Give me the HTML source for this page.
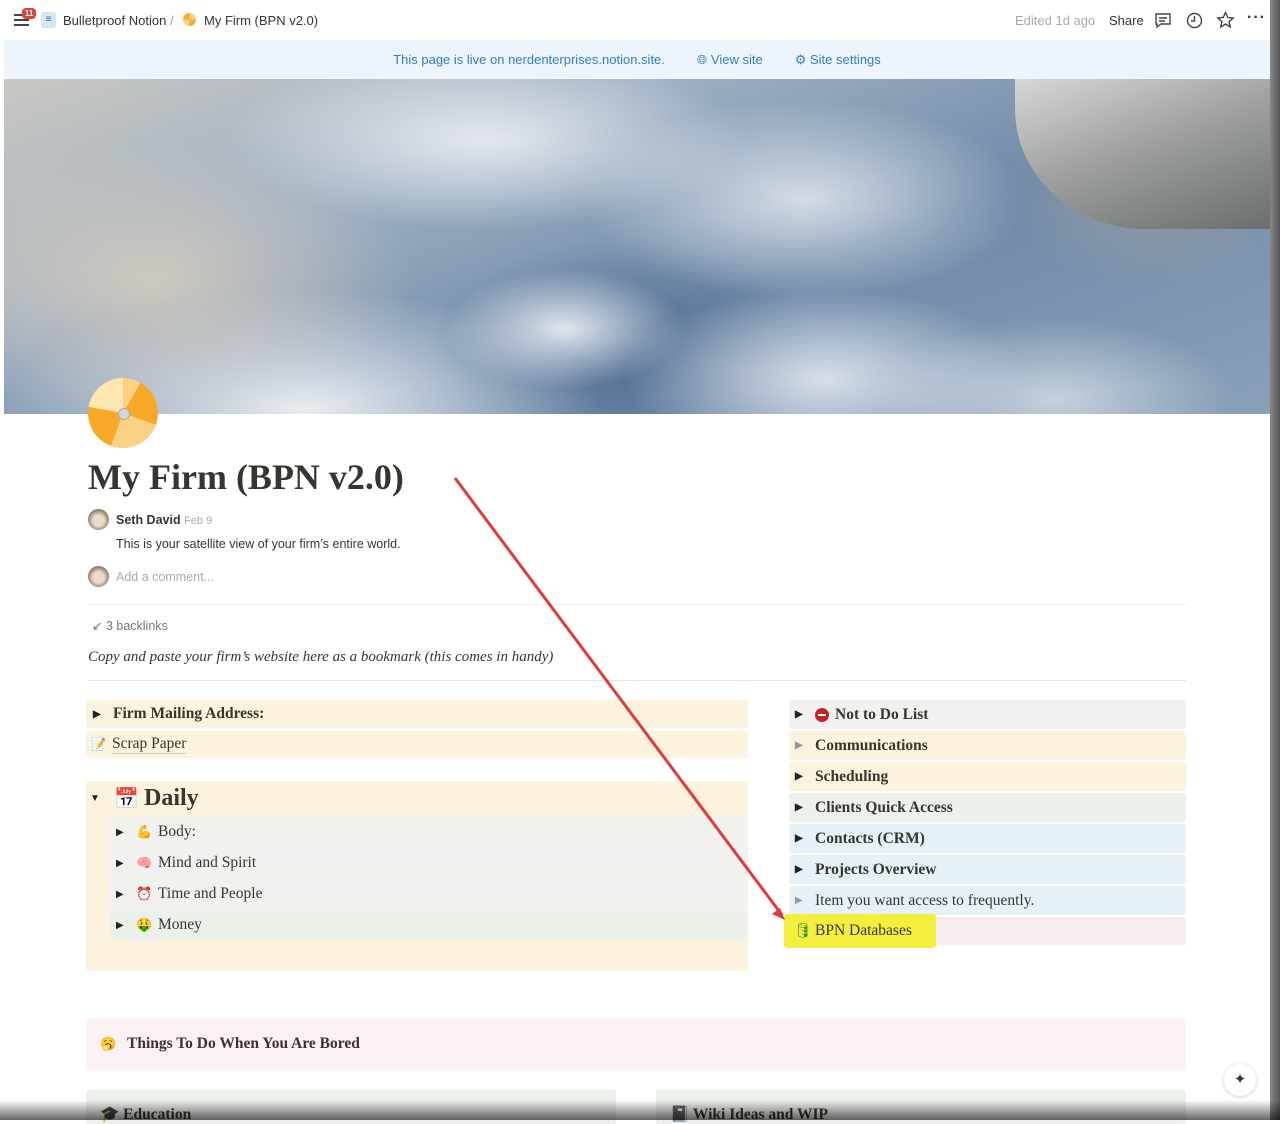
<!DOCTYPE html>
<html><head><meta charset="utf-8"><style>
*{box-sizing:border-box;margin:0;padding:0}
body{width:1280px;height:1120px;overflow:hidden;background:#fff;font-family:"Liberation Sans",sans-serif;color:#37352f;position:relative}
.serif{font-family:"Liberation Serif",serif}
.top{position:absolute;left:0;top:0;width:1270px;height:40px;display:flex;align-items:center;font-size:13px}
.banner{position:absolute;left:4px;top:40px;width:1266px;height:39px;background:#eef4fb;color:#2f7fc4;font-size:13px;display:flex;align-items:center;justify-content:center;gap:32px}
.cover{position:absolute;left:4px;top:79px;width:1266px;height:335px;
background:
radial-gradient(ellipse 260px 140px at 150px 200px,rgba(215,205,190,.85),transparent),
radial-gradient(ellipse 300px 120px at 300px 330px,rgba(240,242,246,.95),transparent),
radial-gradient(ellipse 260px 90px at 480px 60px,rgba(235,238,242,.9),transparent),
radial-gradient(ellipse 120px 60px at 560px 250px,rgba(240,242,246,.9),transparent),
radial-gradient(ellipse 220px 100px at 800px 120px,rgba(228,232,238,.85),transparent),
radial-gradient(ellipse 200px 90px at 820px 300px,rgba(232,236,242,.85),transparent),
radial-gradient(ellipse 180px 80px at 1050px 320px,rgba(215,222,230,.8),transparent),
radial-gradient(ellipse 200px 120px at 620px 280px,rgba(70,100,140,.75),transparent),
radial-gradient(ellipse 150px 100px at 1150px 110px,rgba(150,155,160,.9),transparent),
linear-gradient(160deg,#c9c8c2 0%,#9fb0c2 30%,#6f8aa8 60%,#8aa0b8 100%)}
.sat{position:absolute;left:1015px;top:79px;width:255px;height:150px;background:linear-gradient(160deg,#d6d8d6,#9a9d9b 50%,#6a6e6e);border-bottom-left-radius:130px 120px}
.icon{position:absolute;left:88px;top:378px;width:70px;height:70px;border-radius:50%;background:conic-gradient(#fbd184 0 30deg,#f8a92a 30deg 110deg,#fbd184 110deg 200deg,#f8a92a 200deg 280deg,#fde6b0 280deg 360deg)}
.icon:after{content:"";position:absolute;left:30px;top:30px;width:10px;height:10px;border-radius:50%;background:#cfd8de;border:1px solid #aaa}
h1{position:absolute;left:88px;top:456px;font-family:"Liberation Serif",serif;font-size:36px;font-weight:bold;color:#37352f}
.av{width:21px;height:21px;border-radius:50%;background:radial-gradient(circle at 50% 55%,#e8dccb 35%,#8b7862 70%,#555 100%);position:absolute}
.row{position:absolute;display:flex;align-items:center;font-family:"Liberation Serif",serif;font-size:15.5px;color:#37352f;border-radius:3px}
.tri{font-size:10px;width:20px;display:inline-block;color:#222}
.b{font-weight:bold}
.grey{color:#999}
</style></head><body>
<div class="top">
 <div style="position:absolute;left:14px;top:14px;width:15px;height:12px;border-top:2px solid #444;border-bottom:2px solid #444"><div style="margin-top:3px;height:2px;background:#444"></div></div>
 <div style="position:absolute;left:22px;top:8px;background:#e0403a;color:#fff;font-size:8px;font-weight:bold;border-radius:4px;padding:1px 3px">11</div>
 <div style="position:absolute;left:41px;top:12px;width:15px;height:16px;background:#d6e6f2;border-radius:3px;color:#2b6fb0;font-size:10px;text-align:center;line-height:16px">≡</div>
 <span style="position:absolute;left:63px;top:13px;color:#37352f">Bulletproof Notion <span style="color:#999">/</span></span>
 <div style="position:absolute;left:183px;top:13px;width:13px;height:13px;border-radius:50%;background:conic-gradient(#fbd184 0 90deg,#f8a92a 90deg 180deg,#fbd184 180deg 270deg,#f8a92a 270deg)"></div>
 <span style="position:absolute;left:204px;top:13px">My Firm (BPN v2.0)</span>
 <span style="position:absolute;left:1015px;top:13px;color:#aaa">Edited 1d ago</span>
 <span style="position:absolute;left:1109px;top:13px">Share</span>
 <svg style="position:absolute;left:1154px;top:12px" width="18" height="17" viewBox="0 0 18 17" fill="none" stroke="#444" stroke-width="1.4"><path d="M2 2h14v10H7l-4 3v-3H2z"/><path d="M5 6h8M5 9h6"/></svg>
 <svg style="position:absolute;left:1186px;top:12px" width="17" height="17" viewBox="0 0 17 17" fill="none" stroke="#444" stroke-width="1.4"><circle cx="8.5" cy="8.5" r="7"/><path d="M8.5 4v5H5"/></svg>
 <svg style="position:absolute;left:1216px;top:11px" width="19" height="18" viewBox="0 0 19 18" fill="none" stroke="#444" stroke-width="1.4"><path d="M9.5 1.5l2.3 5 5.4.5-4.1 3.6 1.2 5.3-4.8-2.8-4.8 2.8 1.2-5.3L1.8 7l5.4-.5z"/></svg>
 <span style="position:absolute;left:1247px;top:9px;font-size:16px;letter-spacing:1px;font-weight:bold">···</span>
</div>
<div style="position:absolute;left:1270px;top:0;width:10px;height:1120px;background:linear-gradient(90deg,#888,#555)"></div>
<div class="banner"><span>This page is live on nerdenterprises.notion.site.</span><span>🌐︎ View site</span><span>⚙︎ Site settings</span></div>
<div class="cover"></div>
<div class="sat"></div>
<div class="icon"></div>
<h1>My Firm (BPN v2.0)</h1>
<div class="av" style="left:88px;top:509px"></div>
<span style="position:absolute;left:116px;top:513px;font-size:12.5px;font-weight:bold">Seth David <span style="font-weight:normal;color:#aaa;font-size:11px">Feb 9</span></span>
<span style="position:absolute;left:116px;top:537px;font-size:12.5px">This is your satellite view of your firm’s entire world.</span>
<div class="av" style="left:88px;top:566px"></div>
<span style="position:absolute;left:116px;top:570px;font-size:12.5px;color:#aaa">Add a comment...</span>
<div style="position:absolute;left:88px;top:604px;width:1098px;height:1px;background:#eee"></div>
<span style="position:absolute;left:92px;top:618px;font-size:12.5px;color:#777">↙ 3 backlinks</span>
<span class="serif" style="position:absolute;left:88px;top:649px;font-size:15px;font-style:italic">Copy and paste your firm’s website here as a bookmark (this comes in handy)</span>
<div style="position:absolute;left:88px;top:680px;width:1098px;height:1px;background:#e4e4e4"></div>

<div class="row b" style="left:86px;top:700px;width:662px;height:28px;background:#fbf3dd;padding-left:7px"><span class="tri">▶</span>Firm Mailing Address:</div>
<div class="row" style="left:86px;top:731px;width:662px;height:27px;background:#fbf3dd;padding-left:5px"><span style="width:21px;font-size:12px">📝</span><span style="border-bottom:1px solid #ccc">Scrap Paper</span></div>
<div style="position:absolute;left:86px;top:781px;width:662px;height:190px;background:#fbf3dd"></div>
<div class="row b" style="left:90px;top:784px;height:28px;font-size:24px"><span class="tri" style="width:24px">▼</span><span style="font-size:20px;width:30px">📅</span>Daily</div>
<div class="row" style="left:110px;top:817px;width:637px;height:30px;background:#f1f1ef;padding-left:6px"><span class="tri">▶</span><span style="width:22px;font-size:13px">💪</span>Body:</div>
<div class="row" style="left:110px;top:848px;width:637px;height:30px;background:#f1f1ef;padding-left:6px"><span class="tri">▶</span><span style="width:22px;font-size:13px">🧠</span>Mind and Spirit</div>
<div class="row" style="left:110px;top:879px;width:637px;height:30px;background:#f1f1ef;padding-left:6px"><span class="tri">▶</span><span style="width:22px;font-size:13px;color:#d22">⏰</span>Time and People</div>
<div class="row" style="left:110px;top:910px;width:637px;height:30px;background:#edf1ec;padding-left:6px"><span class="tri">▶</span><span style="width:22px;font-size:13px">🤑</span>Money</div>

<div class="row b" style="left:789px;top:700px;width:397px;height:29px;background:#f1f1ef;padding-left:6px"><span class="tri">▶</span><span style="display:inline-block;width:14px;height:14px;border-radius:50%;background:#c8202a;margin-right:6px;position:relative"><span style="position:absolute;left:3px;top:6px;width:8px;height:2px;background:#fff"></span></span>Not to Do List</div>
<div class="row b" style="left:789px;top:731px;width:397px;height:29px;background:#fbf3dd;padding-left:6px"><span class="tri grey">▶</span>Communications</div>
<div class="row b" style="left:789px;top:762px;width:397px;height:29px;background:#fbf3dd;padding-left:6px"><span class="tri">▶</span>Scheduling</div>
<div class="row b" style="left:789px;top:793px;width:397px;height:29px;background:#edf1ec;padding-left:6px"><span class="tri">▶</span>Clients Quick Access</div>
<div class="row b" style="left:789px;top:824px;width:397px;height:29px;background:#e7f1f8;padding-left:6px"><span class="tri">▶</span>Contacts (CRM)</div>
<div class="row b" style="left:789px;top:855px;width:397px;height:29px;background:#e7f1f8;padding-left:6px"><span class="tri">▶</span>Projects Overview</div>
<div class="row" style="left:789px;top:886px;width:397px;height:29px;background:#e7f1f8;padding-left:6px"><span class="tri grey">▶</span>Item you want access to frequently.</div>
<div class="row" style="left:789px;top:917px;width:397px;height:28px;background:#f6eeee"></div>
<div class="row" style="left:784px;top:914px;width:152px;height:34px;background:#f4ee3c;padding-left:10px"><span style="width:21px;color:#2c8a4a;font-size:14px">🛢︎</span>BPN Databases</div>

<div class="row b" style="left:86px;top:1018px;width:1100px;height:52px;background:#fbf0f4;padding-left:14px"><span style="width:27px;font-size:13px">🥱</span>Things To Do When You Are Bored</div>
<div style="position:absolute;left:1224px;top:1064px;width:32px;height:32px;border-radius:50%;background:#fff;box-shadow:0 1px 4px rgba(0,0,0,.2);text-align:center;line-height:32px;font-size:15px">✦</div>
<div class="row b" style="left:86px;top:1090px;width:530px;height:34px;background:#edf1ec;padding-left:14px;align-items:flex-end">🎓 Education</div>
<div class="row b" style="left:656px;top:1090px;width:530px;height:34px;background:#edf1ec;padding-left:14px;align-items:flex-end">📓 Wiki Ideas and WIP</div>
<div style="position:absolute;left:0;top:1100px;width:1280px;height:20px;background:linear-gradient(180deg,rgba(0,0,0,0),rgba(0,0,0,.6))"></div>

<svg style="position:absolute;left:0;top:0" width="1280" height="1120"><line x1="455" y1="478" x2="782" y2="915" stroke="#e03a3a" stroke-width="3"/><path d="M785 920l-13-6 8-6z" fill="#e03a3a"/></svg>
</body></html>
